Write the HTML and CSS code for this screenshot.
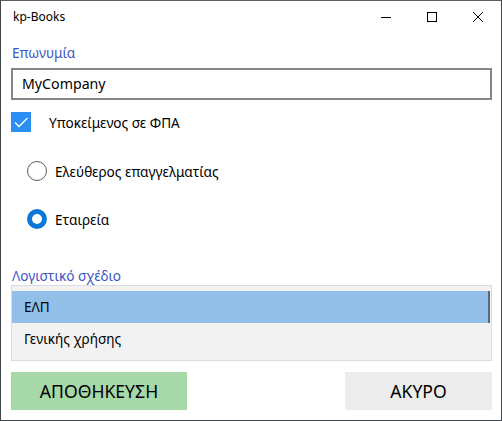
FILE: index.html
```html
<!DOCTYPE html>
<html>
<head>
<meta charset="utf-8">
<link rel="stylesheet" href="styles.css">
</head>
<body>
<div class="window">
  <div class="titlebar">
    <span class="title">kp-Books</span>
    <div class="controls">
      <span class="ctl"><svg width="10" height="10" viewBox="0 0 10 10"><path d="M0 5.5H10" stroke="#000" stroke-width="1"/></svg></span>
      <span class="ctl"><svg width="10" height="10" viewBox="0 0 10 10"><rect x="0.5" y="0.5" width="9" height="9" fill="none" stroke="#000" stroke-width="1"/></svg></span>
      <span class="ctl"><svg width="10" height="10" viewBox="0 0 10 10"><path d="M0 0L10 10M10 0L0 10" stroke="#000" stroke-width="1"/></svg></span>
    </div>
  </div>
  <div class="content">
    <div class="label">Επωνυμία</div>
    <div class="textbox">MyCompany</div>
    <div class="check-row">
      <span class="checkbox"><svg width="20" height="20" viewBox="0 0 20 20"><path d="M4 10.5L8 14.5L16.5 6" fill="none" stroke="#fff" stroke-width="1.3"/></svg></span>
      <span class="check-text">Υποκείμενος σε ΦΠΑ</span>
    </div>
    <div class="radio-row first">
      <span class="radio"></span>
      <span class="radio-text">Ελεύθερος επαγγελματίας</span>
    </div>
    <div class="radio-row second">
      <span class="radio on"></span>
      <span class="radio-text">Εταιρεία</span>
    </div>
    <div class="label second-label">Λογιστικό σχέδιο</div>
    <div class="listbox">
      <div class="item selected">ΕΛΠ</div>
      <div class="item">Γενικής χρήσης</div>
    </div>
    <div class="buttons">
      <div class="btn save">ΑΠΟΘΗΚΕΥΣΗ</div>
      <div class="btn cancel">ΑΚΥΡΟ</div>
    </div>
  </div>
</div>
</body>
</html>
```

FILE: styles.css
```css
* { box-sizing: border-box; }
html, body { margin: 0; padding: 0; background: #fff; }
body {
  font-family: "Noto Sans", "Open Sans", sans-serif;
  color: #000;
}
.window {
  width: 502px;
  height: 421px;
  border: 1px solid #41464c;
  border-top-color: #5a5f66;
  display: flex;
  flex-direction: column;
  overflow: hidden;
}
.titlebar {
  height: 31px;
  display: flex;
  align-items: center;
  justify-content: space-between;
}
.title {
  font-size: 12px;
  padding-left: 12px;
  padding-bottom: 1px;
}
.controls { display: flex; height: 100%; }
.ctl {
  width: 46px;
  display: flex;
  align-items: center;
  justify-content: center;
}
.content {
  padding: 0 9px 0 10px;
  display: flex;
  flex-direction: column;
}
.label {
  color: #3d55c2;
  font-size: 13.6px;
  line-height: 18px;
  padding-left: 1px;
  margin-top: 12px;
}
.textbox {
  margin-top: 6px;
  height: 32px;
  border: 2px solid #858585;
  font-size: 14.2px;
  line-height: 28px;
  padding-left: 9px;
}
.check-row {
  margin-top: 12px;
  display: flex;
  align-items: center;
  height: 20px;
}
.checkbox {
  width: 20px;
  height: 20px;
  background: #2b8ef3;
  display: block;
}
.checkbox svg { display: block; }
.check-text {
  font-size: 13.6px;
  margin-left: 18px;
}
.radio-row {
  display: flex;
  align-items: center;
  height: 20px;
  padding-left: 16px;
}
.radio-row.first { margin-top: 29px; }
.radio-row.second { margin-top: 28px; }
.radio {
  width: 20px;
  height: 20px;
  border-radius: 50%;
  border: 1px solid #5c5c5c;
  background: #fff;
}
.radio.on {
  border: 5px solid #0a78d6;
  background: #fff;
}
.radio-text {
  font-size: 13.6px;
  margin-left: 8px;
}
.second-label { margin-top: 38px; }
.listbox {
  height: 76px;
  border: 1px solid #dcdcdc;
  background: #f2f2f2;
  padding-top: 5px;
}
.item {
  height: 32px;
  font-size: 13.6px;
  line-height: 32px;
  padding-left: 12px;
}
.item.selected {
  background: #91bfe7;
  border-right: 2px solid #5a6a7a;
  margin-right: 1px;
}
.buttons {
  margin-top: 11px;
  display: flex;
  justify-content: space-between;
}
.btn {
  height: 38px;
  font-size: 17.6px;
  line-height: 38px;
  text-align: center;
}
.save { width: 176px; background: #a7d8a7; }
.cancel { width: 147px; background: #ececec; }
```
